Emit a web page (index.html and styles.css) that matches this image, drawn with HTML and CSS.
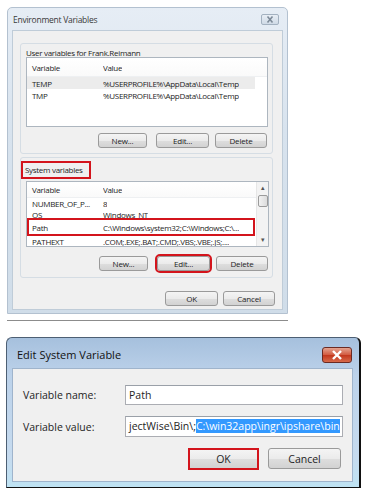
FILE: index.html
```html
<!DOCTYPE html>
<html lang="en">
<head>
    <meta charset="UTF-8">
    <meta name="viewport" content="width=device-width, initial-scale=1.0">
    <title>Environment Variables</title>
    <link rel="stylesheet" href="styles.css">
</head>
<body>
    <!-- first screenshot: Environment Variables dialog -->
    <div class="win env">
        <div class="titlebar">
            <span class="title">Environment Variables</span>
            <span class="close close-inactive">
                <svg width="18" height="11" viewBox="0 0 18 11">
                    <path d="M6.5 2.5 L11.5 8.5 M11.5 2.5 L6.5 8.5" stroke="#7d8a98" stroke-width="1.6" fill="none"/>
                </svg>
            </span>
        </div>
        <div class="client">
            <div class="group user-group">
                <div class="group-label">User variables for Frank.Reimann</div>
                <div class="listbox user-list">
                    <div class="lv-head"><span class="col-var">Variable</span><span class="col-val">Value</span></div>
                    <div class="lv-row lv-sel"><span class="col-var">TEMP</span><span class="col-val">%USERPROFILE%\AppData\Local\Temp</span></div>
                    <div class="lv-row"><span class="col-var">TMP</span><span class="col-val">%USERPROFILE%\AppData\Local\Temp</span></div>
                </div>
                <div class="btn-row">
                    <button class="btn btn-new">New...</button>
                    <button class="btn btn-edit">Edit...</button>
                    <button class="btn btn-delete">Delete</button>
                </div>
            </div>

            <div class="group sys-group">
                <div class="group-label mark">System variables</div>
                <div class="listbox sys-list">
                    <div class="lv-body">
                        <div class="lv-head"><span class="col-var">Variable</span><span class="col-val">Value</span></div>
                        <div class="lv-row"><span class="col-var">NUMBER_OF_P...</span><span class="col-val">8</span></div>
                        <div class="lv-row"><span class="col-var">OS</span><span class="col-val">Windows_NT</span></div>
                        <div class="lv-row mark path-row"><span class="col-var">Path</span><span class="col-val">C:\Windows\system32;C:\Windows;C:\...</span></div>
                        <div class="lv-row"><span class="col-var">PATHEXT</span><span class="col-val">.COM;.EXE;.BAT;.CMD;.VBS;.VBE;.JS;....</span></div>
                    </div>
                    <div class="scrollbar">
                        <span class="arrow">&#9652;</span>
                        <span class="thumb"></span>
                        <span class="track"></span>
                        <span class="arrow">&#9662;</span>
                    </div>
                </div>
                <div class="btn-row">
                    <button class="btn btn-new">New...</button>
                    <button class="btn btn-edit marked">Edit...</button>
                    <button class="btn btn-delete">Delete</button>
                </div>
            </div>

            <div class="footer">
                <button class="btn btn-ok">OK</button>
                <button class="btn btn-cancel">Cancel</button>
            </div>
        </div>
    </div>
    <div class="shot-edge"></div>

    <!-- second screenshot: Edit System Variable dialog -->
    <div class="win edit">
        <div class="titlebar">
            <span class="title">Edit System Variable</span>
            <span class="close close-active">
                <svg width="30" height="16" viewBox="0 0 30 16">
                    <path d="M11 4 L19 12 M19 4 L11 12" stroke="#fff" stroke-width="2.4" fill="none"/>
                </svg>
            </span>
        </div>
        <div class="client">
            <div class="field">
                <span class="field-label">Variable name:</span>
                <div class="textbox">Path</div>
            </div>
            <div class="field">
                <span class="field-label">Variable value:</span>
                <div class="textbox">jectWise\Bin\;<span class="selected">C:\win32app\ingr\ipshare\bin</span></div>
            </div>
            <div class="footer">
                <button class="btn btn-ok marked">OK</button>
                <button class="btn btn-cancel">Cancel</button>
            </div>
        </div>
    </div>
</body>
</html>
```

FILE: styles.css
```css
* {
    box-sizing: border-box;
}
body {
    margin: 0;
    background: #fff;
    font-family: "Open Sans", "Noto Sans", sans-serif;
    color: #1e1e1e;
}
.win {
    display: flex;
    flex-direction: column;
}
.titlebar {
    display: flex;
    justify-content: space-between;
    align-items: flex-start;
}
.client {
    flex: 1;
    display: flex;
    flex-direction: column;
    background: #f0f0f0;
}
.btn {
    font-family: inherit;
    color: #1e1e1e;
    padding: 0;
    border: 1px solid #9a9a9a;
    border-radius: 3px;
    background: linear-gradient(#f4f4f4 0%, #ebebeb 50%, #dedede 51%, #d2d2d2 100%);
}
.mark {
    border: 2px solid #d3141c;
}

/* Environment Variables */
.env {
    margin: 7px 0 0 7px;
    width: 281px;
    height: 307px;
    border: 1px solid #b3c1d0;
    border-radius: 5px 5px 0 0;
    background: linear-gradient(#e6edf5, #d8e3ee 40%, #d0dde9);
    padding: 0 4px 3px;
    letter-spacing: -0.3px;
}
.env .titlebar {
    height: 22px;
}
.env .title {
    font-size: 8.5px;
    color: #3a3a3a;
    margin: 6px 0 0 1px;
    letter-spacing: -0.25px;
}
.close-inactive {
    display: block;
    width: 18px;
    height: 11px;
    margin: 6px 4px 0 0;
    border: 1px solid #a3b1c0;
    border-radius: 2px;
    background: linear-gradient(#e8eef5, #cfdae6);
}
.close-inactive svg {
    display: block;
    margin: -1px;
}
.env .client {
    border: 1px solid #bfccd8;
    padding: 12px 9px 3px 7px;
    font-size: 8px;
}
.shot-edge {
    margin: 6px 0 0 7px;
    width: 281px;
    height: 1px;
    background: #8c8c8c;
}
.group {
    display: flex;
    flex-direction: column;
    border: 1px solid #d5dde4;
    border-radius: 3px;
}
.user-group {
    padding: 4px 4px 5px 5px;
}
.group-label {
    line-height: 9px;
    height: 9px;
    white-space: nowrap;
}
.listbox {
    background: #fff;
    border: 1px solid #adb6bf;
}
.user-list {
    height: 70px;
}
.lv-head {
    display: flex;
    height: 19px;
    align-items: center;
    border-bottom: 1px solid #eef0f2;
    background: linear-gradient(#fff, #fafafa);
}
.lv-row {
    display: flex;
    align-items: center;
    height: 12px;
}
.lv-sel {
    background: #ececec;
    margin-right: 12px;
}
.col-var {
    width: 76px;
    padding-left: 5px;
    white-space: nowrap;
}
.col-val {
    white-space: nowrap;
    overflow: hidden;
}
.btn-row {
    display: flex;
    justify-content: flex-end;
    margin-top: 6px;
    padding-right: 1px;
}
.env .btn {
    height: 15px;
    font-size: 8px;
    letter-spacing: -0.2px;
}
.btn-new {
    width: 49px;
}
.btn-edit {
    width: 53px;
    margin-left: 9px;
}
.btn-delete {
    width: 52px;
    margin-left: 6px;
}
.sys-group {
    margin-top: 3px;
    padding: 3px 3px 6px 0;
}
.sys-group .group-label {
    align-self: flex-start;
    height: 18px;
    line-height: 14px;
    width: 70px;
    padding-left: 2px;
}
.sys-group .listbox,
.sys-group .btn-row {
    margin-left: 5px;
}
.sys-list {
    display: flex;
    height: 66px;
    margin-top: 2px;
    overflow: hidden;
}
.lv-body {
    flex: 1;
    display: flex;
    flex-direction: column;
}
.sys-list .lv-head {
    height: 16px;
    flex: none;
}
.sys-list .lv-row {
    height: 11px;
    flex: none;
}
.path-row {
    position: relative;
    height: 18px !important;
    margin-top: -2px;
    margin-right: 1px;
    background: #fff;
}
.path-row .col-var {
    width: 74px;
    padding-left: 3px;
}
.scrollbar {
    width: 12px;
    display: flex;
    flex-direction: column;
    align-items: center;
    background: #f3f3f3;
    border-left: 1px solid #e6e6e6;
}
.arrow {
    font-size: 7px;
    line-height: 12px;
    height: 12px;
    color: #555;
}
.thumb {
    width: 10px;
    height: 12px;
    margin-top: 1px;
    border: 1px solid #9b9b9b;
    border-radius: 2px;
    background: linear-gradient(90deg, #f2f2f2, #dcdcdc);
}
.track {
    flex: 1;
}
.sys-group .btn-row {
    margin-top: 9px;
}
.marked {
    outline: 2px solid #d3141c;
    outline-offset: 0;
}
.env .footer {
    display: flex;
    justify-content: flex-end;
    margin: 13px -2px 0 0;
}
.env .btn-ok {
    width: 53px;
}
.env .btn-cancel {
    width: 52px;
    margin-left: 5px;
}

/* Edit System Variable */
.edit {
    margin: 16px 0 0 6px;
    width: 355px;
    height: 151px;
    border: 1px solid #4d5f73;
    border-right: 2px solid #111;
    border-bottom: 1px solid #111;
    border-radius: 6px 6px 0 0;
    background: linear-gradient(#a6c0dd, #bcd2ea 25%, #c6dbef 80%, #bfe3f3);
    padding: 0 6px 5px 5px;
}
.edit .titlebar {
    height: 30px;
}
.edit .title {
    font-size: 11px;
    color: #111;
    margin: 9px 0 0 5px;
}
.close-active {
    display: block;
    width: 30px;
    height: 16px;
    margin: 9px 1px 0 0;
    border: 1px solid #6b2a22;
    border-radius: 3px;
    background: linear-gradient(#e4a38f, #d2593f 50%, #c2361c 51%, #d76a4a);
}
.close-active svg {
    display: block;
    margin: -1px;
}
.edit .client {
    border: 1px solid #9fb4cc;
    padding: 16px 9px 0 10px;
    font-size: 10.5px;
}
.field {
    display: flex;
    align-items: center;
    margin-bottom: 11px;
}
.field-label {
    width: 102px;
}
.textbox {
    width: 218px;
    height: 20px;
    line-height: 18px;
    padding-left: 3px;
    background: #fff;
    border: 1px solid #abadb3;
    border-top-color: #9aa0a8;
    white-space: nowrap;
    overflow: hidden;
}
.field + .field .textbox {
    height: 21px;
}
.selected {
    background: #3399ff;
    color: #fff;
}
.edit .footer {
    display: flex;
    justify-content: flex-end;
    margin-right: 2px;
}
.edit .btn {
    font-size: 10.5px;
}
.edit .btn-ok {
    width: 71px;
    height: 22px;
    border: 2px solid #d3141c;
    outline: none;
    border-radius: 0;
}
.edit .btn-cancel {
    width: 73px;
    height: 21px;
    margin-left: 9px;
}
```
